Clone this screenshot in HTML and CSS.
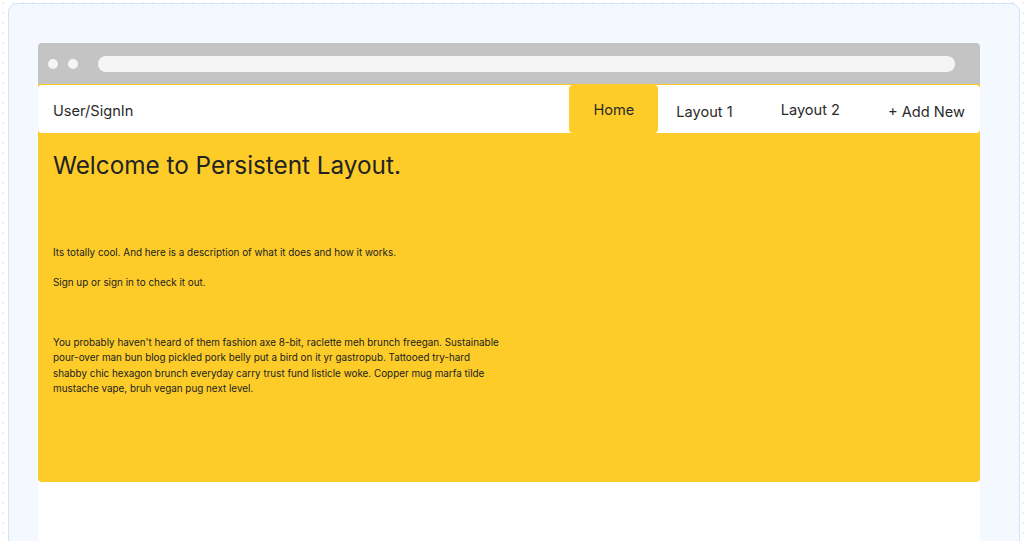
FILE: index.html
```html
<!DOCTYPE html>
<html>
<head>
<meta charset="utf-8">
<link rel="stylesheet" href="styles.css">
</head>
<body>
<div class="panel">
  <div class="window">
    <div class="chrome">
      <span class="dot"></span>
      <span class="dot"></span>
      <span class="url"></span>
    </div>
    <div class="app">
      <nav class="nav">
        <div class="brand">User/SignIn</div>
        <div class="links">
          <a class="tab active">Home</a>
          <a class="tab t1">Layout 1</a>
          <a class="tab t2">Layout 2</a>
          <a class="tab t3">+ Add New</a>
        </div>
      </nav>
      <main class="content">
        <h1 class="title">Welcome to Persistent Layout.</h1>
        <p class="desc">Its totally cool. And here is a description of what it does and how it works.</p>
        <p class="desc">Sign up or sign in to check it out.</p>
        <p class="long">You probably haven't heard of them fashion axe 8-bit, raclette meh brunch freegan. Sustainable pour-over man bun blog pickled pork belly put a bird on it yr gastropub. Tattooed try-hard shabby chic hexagon brunch everyday carry trust fund listicle woke. Copper mug marfa tilde mustache vape, bruh vegan pug next level.</p>
      </main>
    </div>
  </div>
</div>
</body>
</html>
```

FILE: styles.css
```css
html, body {
  margin: 0;
  padding: 0;
  height: 100%;
  overflow: hidden;
}
body {
  background-color: #ffffff;
  background-image: radial-gradient(circle, #dfe7ef 0.6px, transparent 0.9px);
  background-size: 10px 10px;
  background-position: -2px -2px;
  font-family: Inter, "Noto Sans", sans-serif;
  color: #222;
}
.panel {
  margin: 3px 7px 0 8px;
  height: 600px;
  box-sizing: border-box;
  background: #f4f9ff;
  border: 1px solid #cfe4f8;
  border-radius: 9px;
  padding: 39px 39px 0 29px;
}
.window {
  background: #ffffff;
  height: 560px;
  border-radius: 4px 4px 0 0;
}
.chrome {
  height: 41px;
  background: #c4c4c4;
  border-radius: 4px 4px 0 0;
  display: flex;
  align-items: center;
  padding: 0 10px 0 10px;
  gap: 10px;
}
.dot {
  width: 10px;
  height: 10px;
  border-radius: 50%;
  background: #f5f5f5;
}
.url {
  flex: 1;
  height: 16px;
  border-radius: 8px;
  background: #f5f5f5;
  margin-left: 10px;
  margin-right: 15px;
}
.app {
  background: #fdcc29;
  height: 398px;
  border-radius: 0 0 4px 4px;
  display: flex;
  flex-direction: column;
}
.nav {
  margin-top: 1px;
  height: 48px;
  background: #ffffff;
  border-radius: 4px;
  display: flex;
  align-items: stretch;
  justify-content: space-between;
  padding-left: 15px;
}
.brand {
  display: flex;
  align-items: center;
  font-size: 14.6px;
  color: #2a2a2a;
  padding-top: 3px;
}
.links {
  display: flex;
  align-items: stretch;
}
.tab {
  display: flex;
  align-items: center;
  font-size: 14.6px;
  color: #2a2a2a;
}
.tab.active {
  background: #fdcc29;
  border-radius: 4px;
  width: 89px;
  justify-content: center;
  padding-top: 1px;
  box-sizing: border-box;
}
.tab.t1 {
  padding-left: 18px;
  padding-top: 6px;
}
.tab.t2 {
  padding-left: 48px;
  padding-top: 2px;
}
.tab.t3 {
  padding-left: 48px;
  padding-right: 15px;
  padding-top: 6px;
}
.content {
  padding: 0 15px;
}
.title {
  margin: 17px 0 0 0;
  font-size: 24.3px;
  font-weight: 400;
  color: #222;
  line-height: 30px;
}
.desc {
  margin: 0;
  font-size: 9.87px;
  line-height: 15px;
  color: #222;
}
.title + .desc {
  margin-top: 65px;
}
.desc + .desc {
  margin-top: 15px;
}
.long {
  margin: 45px 0 0 0;
  max-width: 448px;
  font-size: 9.87px;
  line-height: 15.3px;
  color: #222;
}
```
